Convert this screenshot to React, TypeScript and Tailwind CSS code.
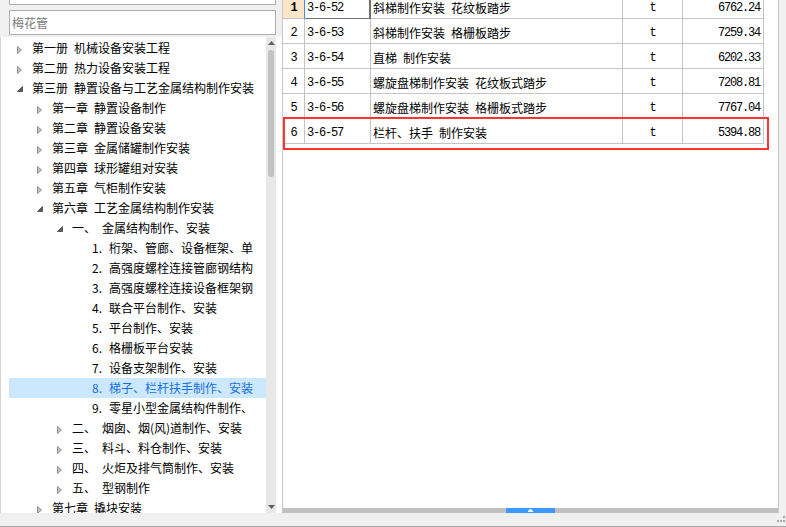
import React from 'react';

type TreeNode = {
    level: number;
    state: 'open' | 'closed' | 'leaf';
    prefix: string;
    label: string;
    selected?: boolean;
};

const TREE: TreeNode[] = [
    { level: 0, state: 'closed', prefix: '第一册', label: '机械设备安装工程' },
    { level: 0, state: 'closed', prefix: '第二册', label: '热力设备安装工程' },
    { level: 0, state: 'open', prefix: '第三册', label: '静置设备与工艺金属结构制作安装' },
    { level: 1, state: 'closed', prefix: '第一章', label: '静置设备制作' },
    { level: 1, state: 'closed', prefix: '第二章', label: '静置设备安装' },
    { level: 1, state: 'closed', prefix: '第三章', label: '金属储罐制作安装' },
    { level: 1, state: 'closed', prefix: '第四章', label: '球形罐组对安装' },
    { level: 1, state: 'closed', prefix: '第五章', label: '气柜制作安装' },
    { level: 1, state: 'open', prefix: '第六章', label: '工艺金属结构制作安装' },
    { level: 2, state: 'open', prefix: '一、', label: '金属结构制作、安装' },
    { level: 3, state: 'leaf', prefix: '1.', label: '桁架、管廊、设备框架、单' },
    { level: 3, state: 'leaf', prefix: '2.', label: '高强度螺栓连接管廊钢结构' },
    { level: 3, state: 'leaf', prefix: '3.', label: '高强度螺栓连接设备框架钢' },
    { level: 3, state: 'leaf', prefix: '4.', label: '联合平台制作、安装' },
    { level: 3, state: 'leaf', prefix: '5.', label: '平台制作、安装' },
    { level: 3, state: 'leaf', prefix: '6.', label: '格栅板平台安装' },
    { level: 3, state: 'leaf', prefix: '7.', label: '设备支架制作、安装' },
    { level: 3, state: 'leaf', prefix: '8.', label: '梯子、栏杆扶手制作、安装', selected: true },
    { level: 3, state: 'leaf', prefix: '9.', label: '零星小型金属结构件制作、' },
    { level: 2, state: 'closed', prefix: '二、', label: '烟囱、烟(风)道制作、安装' },
    { level: 2, state: 'closed', prefix: '三、', label: '料斗、料仓制作、安装' },
    { level: 2, state: 'closed', prefix: '四、', label: '火炬及排气筒制作、安装' },
    { level: 2, state: 'closed', prefix: '五、', label: '型钢制作' },
    { level: 1, state: 'closed', prefix: '第七章', label: '撬块安装' },
];

const ROWS = [
    { no: '1', code: '3-6-52', name: '斜梯制作安装 花纹板踏步', unit: 't', price: '6762.24' },
    { no: '2', code: '3-6-53', name: '斜梯制作安装 格栅板踏步', unit: 't', price: '7259.34' },
    { no: '3', code: '3-6-54', name: '直梯 制作安装', unit: 't', price: '6202.33' },
    { no: '4', code: '3-6-55', name: '螺旋盘梯制作安装 花纹板式踏步', unit: 't', price: '7208.81' },
    { no: '5', code: '3-6-56', name: '螺旋盘梯制作安装 格栅板式踏步', unit: 't', price: '7767.04' },
    { no: '6', code: '3-6-57', name: '栏杆、扶手 制作安装', unit: 't', price: '5394.88' },
];

const INDENT = ['pl-0', 'pl-[20px]', 'pl-[40px]', 'pl-[60px]'];
const PREFIX_W = ['w-[42px]', 'w-[42px]', 'w-[30px]', 'w-[17px]'];

// SimSun-like half-width digits: 6px advance
const mono = "font-['Liberation_Mono',monospace] text-[12px] tracking-[-1.2px]";

function Arrow({ state }: { state: TreeNode['state'] }) {
    if (state === 'closed') {
        return (
            <svg width="5" height="8" viewBox="0 0 5 8" className="ml-[8px] translate-y-[2px]">
                <path d="M0.5 0.5 L4.5 4 L0.5 7.5 Z" fill="#c4c4c4" stroke="#8f8f8f" strokeWidth="1" />
            </svg>
        );
    }
    if (state === 'open') {
        return (
            <svg width="6" height="6" viewBox="0 0 6 6" className="ml-[8px] translate-y-[1px]">
                <path d="M5.5 0.5 L5.5 5.5 L0.5 5.5 Z" fill="#5a5a5a" stroke="#5a5a5a" strokeWidth="1" />
            </svg>
        );
    }
    return null;
}

function TreeRow({ node }: { node: TreeNode }) {
    return (
        <div
            className={`ml-[8px] flex h-[20px] items-center whitespace-nowrap ${INDENT[node.level]} ${
                node.selected ? 'bg-[#cce8ff] text-[#1b6fe0]' : 'text-black'
            }`}
        >
            <span className="flex w-[23px] shrink-0 items-center">
                <Arrow state={node.state} />
            </span>
            <span className={`${PREFIX_W[node.level]} shrink-0`}>{node.prefix}</span>
            <span>{node.label}</span>
        </div>
    );
}

function TreeScrollbar() {
    return (
        <div className="flex w-[10px] shrink-0 flex-col items-center bg-[#e8e8e8]">
            <svg width="7" height="4" viewBox="0 0 7 4" className="mt-[4px]">
                <path d="M3.5 0 L7 4 L0 4 Z" fill="#606060" />
            </svg>
            <div className="mt-[5px] h-[127px] w-[6px] rounded-[3px] bg-[#c2c2c2]" />
            <div className="flex-1" />
            <svg width="7" height="4" viewBox="0 0 7 4" className="mb-[4px]">
                <path d="M0 0 L7 0 L3.5 4 Z" fill="#606060" />
            </svg>
        </div>
    );
}

function LeftPane() {
    return (
        <div className="flex w-[282px] shrink-0 flex-col">
            <div className="pl-[9px] pr-[6px]">
                <div className="h-[5px] border-x border-b border-[#abadb3] bg-white" />
                <div className="mt-[5px] flex h-[25px] items-center border border-[#abadb3] bg-white px-[2px] text-[#7a7a7a]">
                    梅花管
                </div>
            </div>
            <div className="mt-[2px] flex min-h-0 flex-1 border-l border-[#d4d4d4] bg-white">
                <div className="w-[265px] shrink-0 overflow-hidden pt-px">
                    {TREE.map((n, i) => (
                        <TreeRow key={i} node={n} />
                    ))}
                </div>
                <TreeScrollbar />
            </div>
        </div>
    );
}

function NameText({ text }: { text: string }) {
    const parts = text.split(' ');
    return (
        <span className="whitespace-nowrap">
            {parts.map((p, i) => (
                <span key={i} className={i > 0 ? 'ml-[6px]' : ''}>
                    {p}
                </span>
            ))}
        </span>
    );
}

function Table() {
    return (
        <div className="relative min-h-0 flex-1 overflow-hidden">
            <div className="-mt-[6px] w-[481px]">
                {ROWS.map((r, i) => {
                    const first = i === 0;
                    return (
                        <div key={r.no} className="flex h-[25px]">
                            <div
                                className={`flex w-[22px] items-center justify-center border-b border-r border-[#c4c4c4] pt-[3px] ${mono} ${
                                    first ? 'border-r-[#3a8ee6] bg-[#fde6c8] font-bold' : ''
                                }`}
                            >
                                {r.no}
                            </div>
                            <div
                                className={`flex w-[66px] items-center border-b border-r border-[#c4c4c4] pl-[2px] pt-[3px] ${mono} ${
                                    first ? 'border-r-2 border-b-[#707070] border-r-[#707070]' : ''
                                }`}
                            >
                                {r.code}
                            </div>
                            <div className="flex w-[252px] items-center border-b border-r border-[#c4c4c4] pl-[2px] pt-[3px]">
                                <NameText text={r.name} />
                            </div>
                            <div className={`flex w-[60px] items-center justify-center border-b border-r border-[#c4c4c4] pt-[3px] ${mono}`}>
                                {r.unit}
                            </div>
                            <div className={`flex w-[81px] items-center justify-end border-b border-r border-[#c4c4c4] pr-[3px] pt-[3px] ${mono}`}>
                                {r.price}
                            </div>
                        </div>
                    );
                })}
            </div>
            <div className="absolute left-0 top-[117px] h-[33px] w-[486px] border-2 border-[#ff3333]" />
        </div>
    );
}

function RightPane() {
    return (
        <div className="flex w-[497px] shrink-0 flex-col border-x border-[#c8c8c8] bg-white">
            <Table />
            <div className="flex h-[5px]">
                <div className="flex-1 bg-[#c0c0c0]" />
                <div className="flex w-[49px] items-end justify-center bg-[#3d99ff] pb-px">
                    <svg width="5" height="3" viewBox="0 0 5 3">
                        <path d="M2 0 H3 L5 2 V3 H0 V2 Z" fill="#ffffff" />
                    </svg>
                </div>
                <div className="flex-1 bg-[#c0c0c0]" />
            </div>
        </div>
    );
}

function StatusBar() {
    return (
        <div className="flex h-[14px] items-start justify-end border-b border-[#a5a5a5]">
            <svg width="9" height="10" viewBox="0 0 9 10" className="mt-[3px]">
                <rect x="6" y="0" width="2" height="2" fill="#a8a8a8" />
                <rect x="0" y="4" width="2" height="2" fill="#a8a8a8" />
                <rect x="3" y="4" width="2" height="2" fill="#a8a8a8" />
                <rect x="6" y="4" width="2" height="2" fill="#a8a8a8" />
            </svg>
        </div>
    );
}

export default function App() {
    return (
        <div className="flex h-[527px] w-[786px] flex-col overflow-hidden bg-[#f0f0f0] font-['Noto_Sans_CJK_SC',sans-serif] text-[12px] leading-none text-black">
            <div className="flex h-[513px]">
                <LeftPane />
                <RightPane />
                <div className="flex-1" />
            </div>
            <StatusBar />
        </div>
    );
}
